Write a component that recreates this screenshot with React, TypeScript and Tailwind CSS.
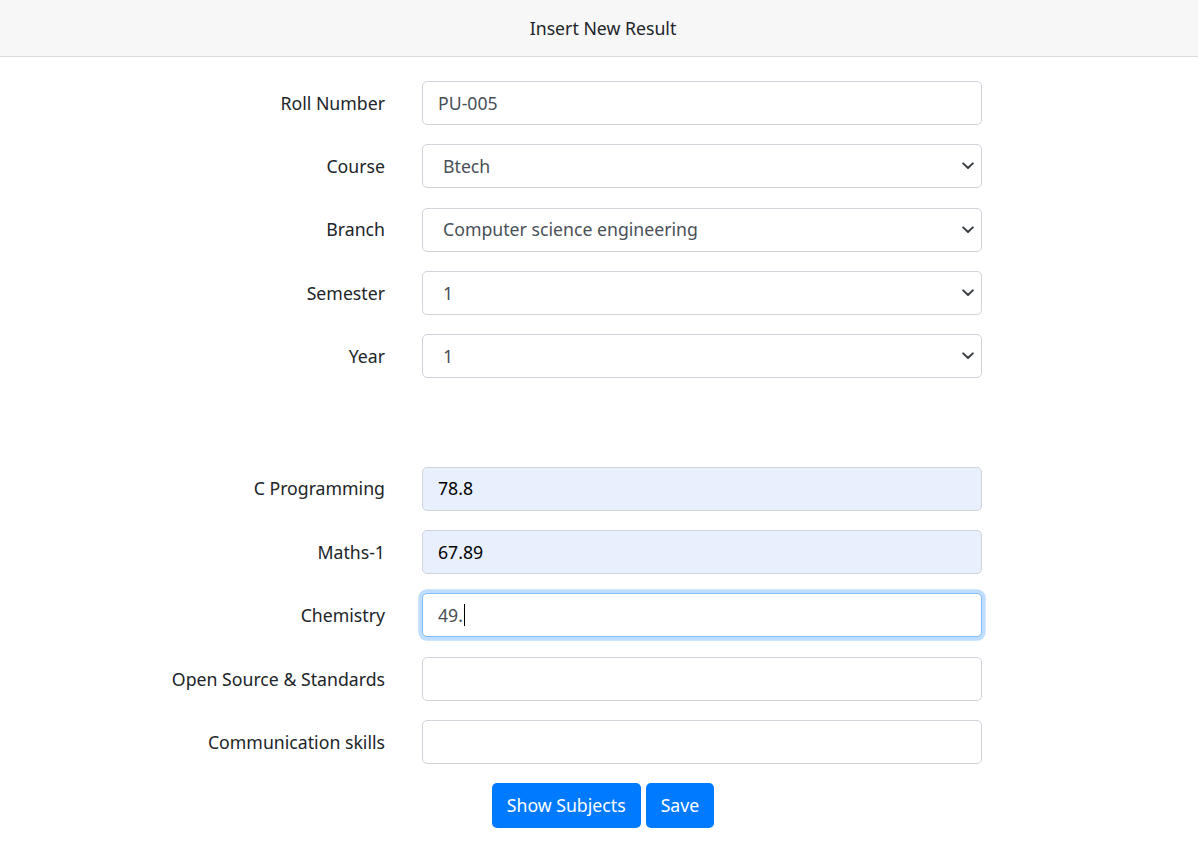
import React from "react";

const font = { fontFamily: '"Noto Sans", "Open Sans", sans-serif' };

function Chevron() {
  return (
    <svg width="12" height="8" viewBox="0 0 12 8" className="absolute right-[7px] top-1/2 -translate-y-1/2">
      <path d="M1.2 1.4 L6 6 L10.8 1.4" fill="none" stroke="#3a3f44" strokeWidth="2" strokeLinecap="round" strokeLinejoin="round" />
    </svg>
  );
}

type Field = { label: string; value?: string; kind: "input" | "select" | "auto" | "focus" };

function Row({ f }: { f: Field }) {
  let box = "relative h-[44px] w-[560px] rounded-[5px] border flex items-center";
  if (f.kind === "auto") box += " border-[#ced4da] bg-[#e8f0fe] text-black pl-[15px]";
  else if (f.kind === "focus") box += " border-[#80bdff] bg-white text-[#495057] pl-[15px] shadow-[0_0_0_3.7px_rgba(0,123,255,0.25)]";
  else if (f.kind === "select") box += " border-[#ced4da] bg-white text-[#495057] pl-[20px]";
  else box += " border-[#ced4da] bg-white text-[#495057] pl-[15px]";
  return (
    <div className="flex items-center">
      <div className="w-[385px] text-right text-[#212529]">{f.label}</div>
      <div className="ml-[37px]">
        <div className={box}>
          <span>{f.value}</span>
          {f.kind === "focus" && <span className="inline-block w-[1px] h-[22px] bg-black ml-[1px]" />}
          {f.kind === "select" && <Chevron />}
        </div>
      </div>
    </div>
  );
}

export default function App() {
  const top: Field[] = [
    { label: "Roll Number", value: "PU-005", kind: "input" },
    { label: "Course", value: "Btech", kind: "select" },
    { label: "Branch", value: "Computer science engineering", kind: "select" },
    { label: "Semester", value: "1", kind: "select" },
    { label: "Year", value: "1", kind: "select" },
  ];
  const marks: Field[] = [
    { label: "C Programming", value: "78.8", kind: "auto" },
    { label: "Maths-1", value: "67.89", kind: "auto" },
    { label: "Chemistry", value: "49.", kind: "focus" },
    { label: "Open Source & Standards", value: "", kind: "input" },
    { label: "Communication skills", value: "", kind: "input" },
  ];
  return (
    <div className="min-h-[857px] w-full bg-white text-[17.7px] leading-[1.5]" style={font}>
      <div className="h-[57px] bg-[#f7f7f7] border-b border-[#dcdcdc] flex items-center justify-center pl-[8px] text-[#212529]">
        Insert New Result
      </div>
      <div className="pt-[24px] flex flex-col gap-[19.3px]">
        {top.map((f) => (
          <Row key={f.label} f={f} />
        ))}
      </div>
      <div className="pt-[88.5px] flex flex-col gap-[19.4px]">
        {marks.map((f) => (
          <Row key={f.label} f={f} />
        ))}
      </div>
      <div className="pt-[19px] flex justify-center gap-[5px] pl-[8px]">
        <button className="h-[45px] px-[15px] rounded-[5px] bg-[#007bff] text-white">Show Subjects</button>
        <button className="h-[45px] px-[15px] rounded-[5px] bg-[#007bff] text-white">Save</button>
      </div>
    </div>
  );
}
